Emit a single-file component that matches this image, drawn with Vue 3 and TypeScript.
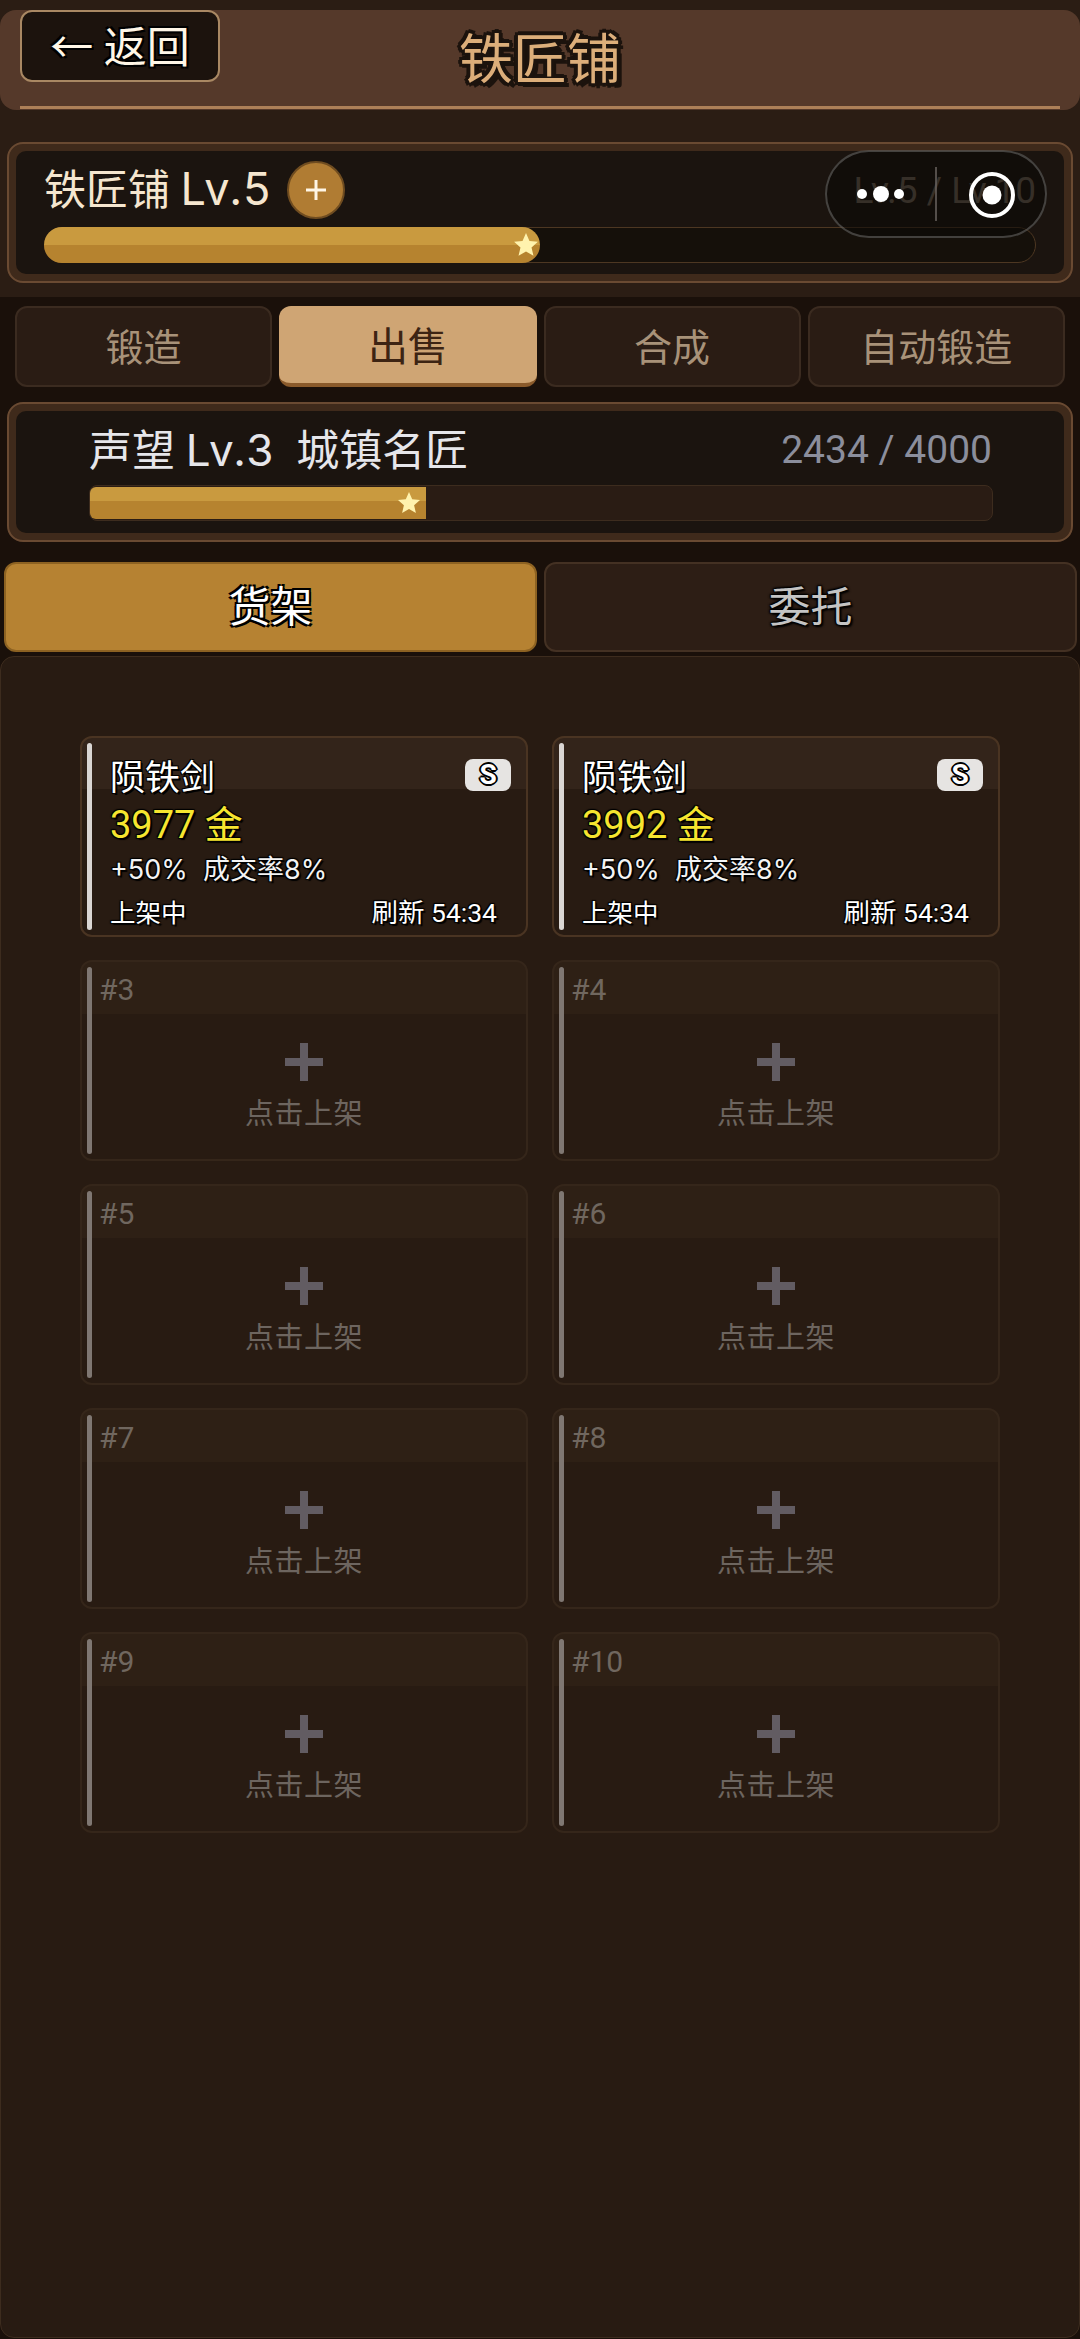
<script setup lang="ts">
import { computed } from 'vue'

/* ---- Types ---- */
interface ShelfItem {
  id: number
  name?: string
  price?: number
  grade?: string
  bonus?: string
  rate?: string
  refresh?: string
}

/* ---- Data ---- */
const shopTabs = ['锻造', '出售', '合成', '自动锻造']
const activeShopTab = '出售'

const repFillWidth = 336

const slots: ShelfItem[] = [
  { id: 1, name: '陨铁剑', price: 3977, grade: 'S', bonus: '+50%', rate: '成交率8%', refresh: '54:34' },
  { id: 2, name: '陨铁剑', price: 3992, grade: 'S', bonus: '+50%', rate: '成交率8%', refresh: '54:34' },
  { id: 3 }, { id: 4 }, { id: 5 }, { id: 6 }, { id: 7 }, { id: 8 }, { id: 9 }, { id: 10 },
]

const repFillStyle = computed(() => ({ width: `${repFillWidth}px` }))
</script>

<template>
  <div class="page">
    <div class="top-zone">
      <!-- Header -->
      <header class="header">
        <button class="back-btn">← 返回</button>
        <h1 class="title">铁匠铺</h1>
      </header>

      <!-- Shop level -->
      <section class="frame level-frame">
        <div class="frame-inner level-inner">
          <div class="level-row">
            <div class="level-name">
              <span>铁匠铺 <span class="lv">Lv.5</span></span>
              <span class="up-btn">
                <svg width="22" height="22" viewBox="0 0 22 22"><path d="M11 1v20M1 11h20" stroke="#fff6e6" stroke-width="3" /></svg>
              </span>
            </div>
            <span class="level-max">Lv.5 / Lv.10</span>
          </div>
          <div class="level-track">
            <div class="level-fill">
              <svg class="star" width="26" height="26" viewBox="0 0 24 24"><path d="M12 1l3.2 7.3 7.8.7-5.9 5.2 1.8 7.8L12 18l-6.9 4 1.8-7.8L1 9l7.8-.7z" fill="#fff3ae" /></svg>
            </div>
          </div>
        </div>
      </section>
    </div>

    <div class="main-zone">
      <!-- Shop tabs -->
      <nav class="shop-tabs">
        <div
          v-for="tab in shopTabs"
          :key="tab"
          class="shop-tab"
          :class="{ active: tab === activeShopTab }"
        >{{ tab }}</div>
      </nav>

      <!-- Reputation -->
      <section class="frame rep-frame">
        <div class="frame-inner rep-inner">
          <div class="rep-row">
            <span class="rep-name">声望 <span class="lv">Lv.3</span>&nbsp;&nbsp;城镇名匠</span>
            <span class="rep-count">2434 / 4000</span>
          </div>
          <div class="rep-track">
            <div class="rep-fill" :style="repFillStyle">
              <svg class="star" width="24" height="24" viewBox="0 0 24 24"><path d="M12 1l3.2 7.3 7.8.7-5.9 5.2 1.8 7.8L12 18l-6.9 4 1.8-7.8L1 9l7.8-.7z" fill="#fff3ae" /></svg>
            </div>
          </div>
        </div>
      </section>

      <!-- Shelf / commission -->
      <div class="sub-tabs">
        <div class="sub-tab active">货架</div>
        <div class="sub-tab">委托</div>
      </div>

      <section class="shelf-panel">
        <div class="shelf-grid">
          <template v-for="slot in slots" :key="slot.id">
            <div v-if="slot.name" class="slot filled">
              <span class="slot-bar"></span>
              <div class="slot-head">
                <span class="item-name">{{ slot.name }}</span>
                <span class="grade">{{ slot.grade }}</span>
              </div>
              <div class="item-price">{{ slot.price }} 金</div>
              <div class="item-stats">{{ slot.bonus }}&nbsp;&nbsp;{{ slot.rate }}</div>
              <div class="item-foot">
                <span>上架中</span>
                <span class="refresh">刷新 {{ slot.refresh }}</span>
              </div>
            </div>
            <div v-else class="slot empty">
              <span class="slot-bar"></span>
              <div class="slot-no">#{{ slot.id }}</div>
              <svg class="add-icon" width="38" height="38" viewBox="0 0 38 38"><path d="M19 0v38M0 19h38" stroke="#625c62" stroke-width="8" /></svg>
              <div class="add-text">点击上架</div>
            </div>
          </template>
        </div>
      </section>
    </div>

    <!-- Mini program capsule -->
    <div class="capsule">
      <svg width="222" height="88" viewBox="0 0 222 88">
        <circle cx="37" cy="44" r="5" fill="#fff" />
        <circle cx="56" cy="44" r="8" fill="#fff" />
        <circle cx="74" cy="44" r="5" fill="#fff" />
        <path d="M111 17v54" stroke="#6b6560" stroke-width="1.5" />
        <circle cx="167" cy="45" r="21" fill="none" stroke="#fff" stroke-width="4" />
        <circle cx="167" cy="45" r="9.5" fill="#fff" />
      </svg>
    </div>
  </div>
</template>

<style>
html, body {
  margin: 0;
  background: #1a100a;
}
</style>

<style scoped>
.page {
  position: relative;
  width: 1080px;
  height: 2339px;
  overflow: hidden;
  display: flex;
  flex-direction: column;
  background: #1a100a;
  font-family: Roboto, "Noto Sans CJK SC", sans-serif;
  color: #fff;
}

.lv {
  font-family: Inter, Roboto, sans-serif;
  font-size: 45px;
  letter-spacing: 1.5px;
}

/* Top */
.top-zone {
  flex: none;
  box-sizing: border-box;
  height: 297px;
  padding-top: 10px;
  background: #2b1d14;
}

.header {
  position: relative;
  height: 100px;
  background: #55392a;
  border-radius: 16px;
  display: flex;
  justify-content: center;
}

.header::after {
  content: '';
  position: absolute;
  left: 20px;
  right: 20px;
  bottom: 1px;
  height: 3px;
  background: #ad8058;
}

.back-btn {
  position: absolute;
  left: 20px;
  top: 0;
  box-sizing: border-box;
  width: 200px;
  height: 72px;
  padding: 4px 0 0 0;
  background: #1c130d;
  border: 2px solid #a98863;
  border-radius: 12px;
  color: #fff6e6;
  font: 400 43px/1 Roboto, "Noto Sans CJK SC", sans-serif;
  text-shadow: 2px 2px 0 #000, -2px 2px 0 #000, 2px -2px 0 #000, -2px -2px 0 #000;
}

.title {
  margin: 0;
  font-size: 54px;
  font-weight: 400;
  line-height: 102px;
  color: #dcae7a;
  text-shadow: 3px 3px 0 #1c130d, -3px 3px 0 #1c130d, 3px -3px 0 #1c130d, -3px -3px 0 #1c130d, 4px 0 0 #1c130d, -4px 0 0 #1c130d, 0 4px 0 #1c130d, 0 -4px 0 #1c130d, 5px 5px 0 #1c130d;
}

/* Framed panels */
.frame {
  box-sizing: border-box;
  margin: 0 7px;
  padding: 7px;
  background: #3f2a1b;
  border: 2px solid #6a4a32;
  border-radius: 16px;
}

.frame-inner {
  box-sizing: border-box;
  height: 100%;
  background: #1b140f;
  border-radius: 10px;
}

.level-frame {
  margin-top: 32px;
  height: 141px;
}

.level-inner {
  padding: 7px 28px 0 28px;
}

.level-row {
  height: 69px;
  padding-bottom: 5px;
  box-sizing: border-box;
  display: flex;
  justify-content: space-between;
  align-items: center;
}

.level-name {
  display: flex;
  align-items: center;
  gap: 15px;
  height: 58px;
  line-height: 58px;
  font-size: 42px;
  color: #f5e6cf;
}

.up-btn {
  box-sizing: border-box;
  width: 58px;
  height: 58px;
  border-radius: 50%;
  background: #b07c33;
  border: 2px solid #6f4c20;
  display: flex;
  align-items: center;
  justify-content: center;
}

.level-max {
  font-size: 37px;
  color: #6d6152;
}

.level-track {
  box-sizing: border-box;
  height: 36px;
  background: #15100a;
  border: 1px solid #4d3722;
  border-radius: 18px;
}

.level-fill {
  position: relative;
  width: 496px;
  height: 36px;
  margin-top: -1px;
  margin-left: -1px;
  border-radius: 18px;
  background: linear-gradient(#c99a3f 50%, #b6832f 50%);
}

.star {
  position: absolute;
  right: 1px;
  top: 50%;
  transform: translateY(-50%);
}

/* Shop tabs */
.main-zone {
  flex: 1;
  min-height: 0;
  display: flex;
  flex-direction: column;
  padding-top: 9px;
}

.shop-tabs {
  display: grid;
  grid-template-columns: repeat(4, 1fr);
  gap: 7px;
  height: 81px;
  padding: 0 15px;
}

.shop-tab {
  box-sizing: border-box;
  display: flex;
  align-items: center;
  justify-content: center;
  padding-bottom: 4px;
  background: #2a1c14;
  border: 2px solid #3b2b20;
  border-radius: 12px;
  font-size: 38px;
  color: #a89279;
}

.shop-tab.active {
  background: #cfa574;
  border: none;
  border-bottom: 4px solid #8a5a2b;
  padding-bottom: 1px;
  font-size: 40px;
  color: #3d2413;
}

/* Reputation */
.rep-frame {
  margin-top: 15px;
  height: 140px;
}

.rep-inner {
  padding: 5px 71px 0 73px;
}

.rep-row {
  height: 69px;
  padding-bottom: 2px;
  box-sizing: border-box;
  display: flex;
  justify-content: space-between;
  align-items: center;
}

.rep-name {
  height: 56px;
  line-height: 56px;
  font-size: 43px;
  color: #e6e6ea;
}

.rep-name .lv {
  font-size: 44px;
}

.rep-count {
  margin-right: 1px;
  font-size: 39px;
  color: #8b8e9c;
}

.rep-track {
  box-sizing: border-box;
  height: 36px;
  padding-top: 1px;
  background: #2a1c14;
  border: 1px solid #3d2c1e;
  border-radius: 8px;
}

.rep-fill {
  position: relative;
  height: 32px;
  border-radius: 6px 0 0 6px;
  background: linear-gradient(#c99a3f 44%, #b6832f 44%);
}

.rep-fill .star {
  right: 5px;
}

/* Sub tabs */
.sub-tabs {
  display: grid;
  grid-template-columns: repeat(2, 1fr);
  gap: 7px;
  height: 90px;
  margin-top: 20px;
  padding: 0 3px 0 4px;
}

.sub-tab {
  box-sizing: border-box;
  display: flex;
  align-items: center;
  justify-content: center;
  padding-bottom: 7px;
  background: #2d1e15;
  border: 2px solid #443123;
  border-radius: 12px;
  font-size: 42px;
  color: #c4c4c4;
  text-shadow: 2px 2px 2px #000, -1px 1px 2px #000, 1px -1px 2px #000, -1px -1px 2px #000;
}

.sub-tab.active {
  background: #b68232;
  border-color: #8d6222;
  color: #fff;
  text-shadow: 2px 2px 0 #000, -2px 2px 0 #000, 2px -2px 0 #000, -2px -2px 0 #000;
}

/* Shelf */
.shelf-panel {
  flex: 1;
  box-sizing: border-box;
  margin: 4px 0 1px;
  padding: 79px 79px 0;
  background: #281b12;
  border: 1px solid #3d2c1e;
  border-radius: 14px;
}

.shelf-grid {
  display: grid;
  grid-template-columns: repeat(2, 448px);
  grid-auto-rows: 201px;
  gap: 23px 24px;
}

.slot {
  position: relative;
  box-sizing: border-box;
  padding: 0 28px;
  border-radius: 12px;
}

.slot-bar {
  position: absolute;
  left: 5px;
  top: 5px;
  bottom: 5px;
  width: 5px;
  border-radius: 3px;
  background: #dad6d3;
}

.filled {
  background: linear-gradient(#33241a 51px, #281b12 51px);
  border: 2px solid #4a3422;
  padding-top: 14px;
}

.empty {
  background: linear-gradient(#2e2015 52px, #281b12 52px);
  border: 2px solid #35261a;
  text-align: center;
}

.empty .slot-bar {
  background: #7f7772;
}

.slot-head {
  height: 44px;
  display: flex;
  justify-content: space-between;
  align-items: center;
}

.item-name {
  font-size: 35px;
  color: #fff;
  text-shadow: 2px 2px 0 #000, -1px 1px 0 #000, 1px -1px 0 #000, -1px -1px 0 #000;
}

.grade {
  box-sizing: border-box;
  width: 46px;
  height: 32px;
  margin: 2px -13px 0 0;
  background: #e6e4e2;
  border-radius: 8px;
  text-align: center;
  font-size: 28px;
  line-height: 31px;
  font-weight: 700;
  color: #fff;
  text-shadow: 2px 0 0 #000, -2px 0 0 #000, 0 2px 0 #000, 0 -2px 0 #000, 1px 1px 0 #000, -1px 1px 0 #000, 1px -1px 0 #000, -1px -1px 0 #000;
}

.item-price {
  height: 56px;
  margin-top: 1px;
  font-size: 38px;
  line-height: 56px;
  color: #f6e52f;
  text-shadow: 2px 2px 1px #000, -1px 1px 1px #000, 1px -1px 1px #000, -1px -1px 1px #000;
}

.item-stats {
  height: 32px;
  margin-top: 1px;
  font-family: Inter, "Noto Sans CJK SC", sans-serif;
  font-size: 27px;
  line-height: 32px;
  color: #f4f4f4;
  text-shadow: 2px 2px 1px #000, -1px 1px 1px #000, 1px -1px 1px #000, -1px -1px 1px #000;
}

.item-foot {
  margin-top: 3px;
  height: 42px;
  display: flex;
  justify-content: space-between;
  align-items: center;
  font-size: 25.5px;
  color: #fff;
  text-shadow: 2px 2px 1px #000, -1px 1px 1px #000, 1px -1px 1px #000, -1px -1px 1px #000;
}

.refresh {
  margin-right: 1px;
  font-size: 26.5px;
}

.slot-no {
  position: absolute;
  left: 17px;
  top: 10px;
  font-size: 30px;
  line-height: 36px;
  color: #70675f;
}

.add-icon {
  display: block;
  margin: 81px auto 0;
}

.add-text {
  margin-top: 13px;
  font-size: 29px;
  line-height: 40px;
  letter-spacing: 0.5px;
  color: #6d655f;
}

/* Capsule */
.capsule {
  position: absolute;
  left: 825px;
  top: 150px;
  box-sizing: border-box;
  width: 222px;
  height: 88px;
  background: rgba(10, 7, 5, 0.55);
  border: 2px solid rgba(255, 255, 255, 0.22);
  border-radius: 44px;
}

.capsule svg {
  display: block;
  margin: -2px;
}
</style>
